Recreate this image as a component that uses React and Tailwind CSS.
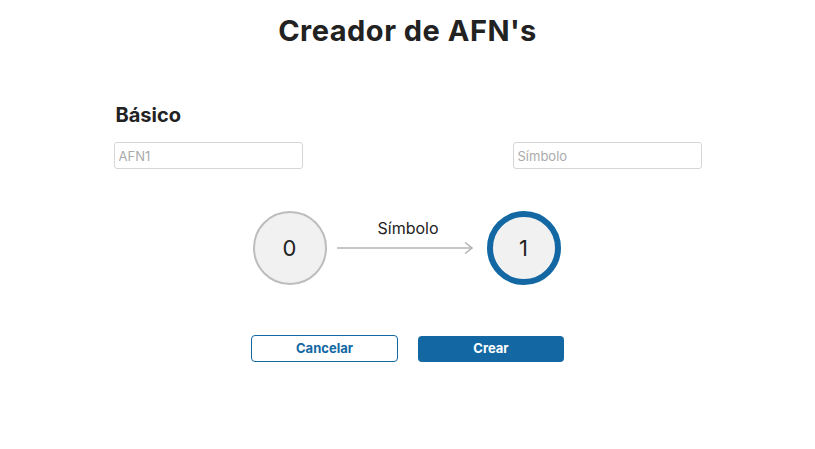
import React from 'react';

function State({ label, final }) {
  return (
    <div
      className={`w-[74px] h-[74px] rounded-full bg-[#f1f1f1] flex items-center justify-center text-[22px] text-[#222] ${
        final ? 'border-[6px] border-[#1368a3]' : 'border-2 border-[#bdbdbd]'
      }`}
    >
      {label}
    </div>
  );
}

export default function App() {
  const [name, setName] = React.useState('');
  const [symbol, setSymbol] = React.useState('');

  return (
    <div className="w-[815px] h-[449px] bg-white font-['Inter',sans-serif] text-[#222]">
      <h1 className="text-center text-[29px] font-bold pt-[14px] leading-[34px] tracking-[0.5px]">
        Creador de AFN's
      </h1>

      <div className="w-[588px] mx-auto mt-[55px]">
        <h2 className="text-[20px] font-bold pl-[2px] leading-[24px]">Básico</h2>

        <div className="flex justify-between mt-[15px]">
          <input
            className="w-[189px] h-[27px] border border-[#d6d6d6] rounded-[3px] px-[4px] text-[13px] placeholder-[#aaa] outline-none"
            placeholder="AFN1"
            value={name}
            onChange={(e) => setName(e.target.value)}
          />
          <input
            className="w-[189px] h-[27px] border border-[#d6d6d6] rounded-[3px] px-[4px] text-[13px] placeholder-[#aaa] outline-none"
            placeholder="Símbolo"
            value={symbol}
            onChange={(e) => setSymbol(e.target.value)}
          />
        </div>

        {/* diagrama */}
        <div className="flex items-center justify-center mt-[42px] pr-[2px]">
          <State label="0" />
          <div className="flex flex-col items-center w-[136px] ml-[10px] mr-[14px]">
            <span className="text-[16px] leading-[20px] h-[20px] pl-[7px]">{symbol || 'Símbolo'}</span>
            <svg width="136" height="12" viewBox="0 0 136 12" className="mt-[4px]">
              <line x1="0" y1="6" x2="135" y2="6" stroke="#b3b3b3" strokeWidth="1.5" />
              <polyline points="128,0.5 135,6 128,11.5" fill="none" stroke="#b3b3b3" strokeWidth="1.5" />
            </svg>
            <div className="h-[24px]" />
          </div>
          <State label="1" final />
        </div>

        <div className="flex justify-center gap-[20px] mt-[50px]">
          <button className="w-[147px] h-[27px] border border-[#1368a3] rounded-[4px] text-[13px] font-bold text-[#1368a3] bg-white">
            Cancelar
          </button>
          <button className="w-[146px] h-[26px] mt-[1px] rounded-[4px] text-[13px] font-bold text-white bg-[#1368a3]">
            Crear
          </button>
        </div>
      </div>
    </div>
  );
}
